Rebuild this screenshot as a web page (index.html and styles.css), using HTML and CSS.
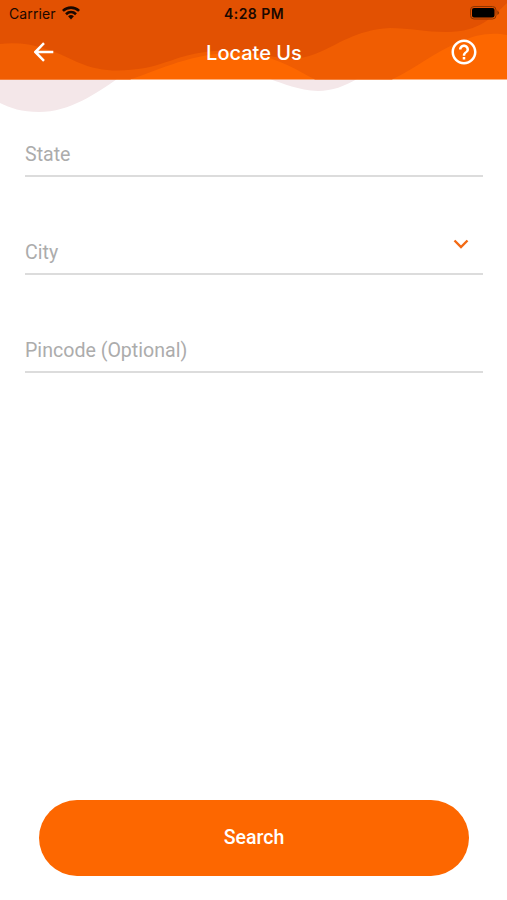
FILE: index.html
```html
<!DOCTYPE html>
<html lang="en">
<head>
<meta charset="utf-8">
<title>Locate Us</title>
<link rel="stylesheet" href="styles.css">
</head>
<body>
<div class="screen">
  <header class="header">
    <svg class="waves" viewBox="0 0 507 120" aria-hidden="true">
      <path fill="#f4e7e9" d="M0 79H117C97 93 70 112 39 112C22 112 10 108 0 103ZM270 79H357C345 86 332 91 318 91C298 90 284 84 270 79Z"/>
      <path fill="#fd6700" d="M0 0H507V79.500H0Z"/>
      <path fill="#f05d02" d="M0 0H507V35C493 32 475 34 460 42C432 53 415 69 392 79.500H315C295 69 275 56 245 53C195 51 163 69 130 79.500H0Z"/>
      <path fill="#e25102" d="M0 0H507V3C493 16 480 32 447 32C425 32 410 28 390 28C355 30 338 45 315 54C300 60 285 59 270 56C250 52 225 49 205 52C180 55 160 66 145 68C120 72 100 72 77 62C50 49 29 41 0 44Z"/>
    </svg>
    <div class="status">
      <div class="carrier"><span>Carrier</span>
        <svg class="wifi" viewBox="0 0 18 14"><g fill="none" stroke="#1a0800" stroke-width="2.600"><path d="M.9 4.9C5.5.5 12.500.5 17.100 4.900"/><path d="M4 8.200C6.900 5.400 11.100 5.400 14 8.200"/></g><path fill="#1a0800" d="M6.100 10.300Q9 7.900 11.900 10.300L9 13.500Z"/></svg>
      </div>
      <div class="time">4:28 PM</div>
      <svg class="battery" viewBox="0 0 30 14"><rect x=".5" y=".5" width="25.500" height="12.500" rx="3.500" fill="none" stroke="#8f3500"/><rect x="2" y="2" width="22.500" height="9.500" rx="2" fill="#000"/><path fill="#8f3500" d="M27.300 4.500Q31 6.750 27.300 9Z"/></svg>
    </div>
    <div class="bar">
      <svg class="back" viewBox="0 0 20 20"><path d="M19.300 10H1.500M10 1.200L1.300 10L10 18.800" fill="none" stroke="#fff" stroke-width="2.500"/></svg>
      <h1 class="title">Locate Us</h1>
      <svg class="help" viewBox="0 0 24 24"><path fill="#fff" d="M11 18h2v-2h-2v2zm1-16C6.480 2 2 6.480 2 12s4.480 10 10 10 10-4.480 10-10S17.520 2 12 2zm0 18c-4.410 0-8-3.590-8-8s3.590-8 8-8 8 3.590 8 8-3.590 8-8 8zm0-14c-2.210 0-4 1.790-4 4h2c0-1.100.900-2 2-2s2 .900 2 2c0 2-3 1.750-3 5h2c0-2.250 3-2.500 3-5 0-2.210-1.790-4-4-4z"/></svg>
    </div>
  </header>
  <main class="form">
    <div class="field"><span>State</span></div>
    <div class="field"><span>City</span><svg class="chevron" viewBox="0 0 16 10"><path d="M1.500 1.500L8 8L14.500 1.500" fill="none" stroke="#f36a14" stroke-width="2.400"/></svg></div>
    <div class="field"><span>Pincode (Optional)</span></div>
  </main>
  <button class="search">Search</button>
</div>
</body>
</html>
```
FILE: styles.css
```css
* { box-sizing: border-box; }
body { margin: 0; background: #fff; font-family: Roboto, "Liberation Sans", sans-serif; }
.screen { width: 507px; height: 900px; display: flex; flex-direction: column; overflow: hidden; }
.header { position: relative; height: 80px; flex: none; }
.waves { position: absolute; left: 0; top: 0; width: 507px; height: 120px; z-index: -1; }
.status { height: 28px; display: grid; grid-template-columns: 1fr auto 1fr; align-items: center; padding: 0 7px 2px 9px; font-family: Inter, sans-serif; font-size: 14px; color: #1a0800; }
.carrier { display: flex; align-items: center; gap: 6px; letter-spacing: .1px; }
.wifi { width: 18px; height: 14px; }
.time { margin-left: -1px; font-weight: 600; letter-spacing: .45px; }
.battery { width: 30px; height: 14px; justify-self: end; }
.bar { height: 48px; display: grid; grid-template-columns: 1fr auto 1fr; align-items: center; padding: 0 28px 0 34px; }
.back { width: 20px; height: 20px; }
.title { margin: 0 0 0 -5px; padding-top: 1px; font: 500 20px Inter, sans-serif; color: #fff; }
.help { width: 30px; height: 30px; justify-self: end; }
.form { padding: 33px 24px 0 25px; }
.field { height: 64px; margin-bottom: 34px; border-bottom: 2px solid #dcdcdc; display: flex; align-items: center; justify-content: space-between; padding: 20px 14px 0 0; font-size: 19.6px; color: #acacac; }
.chevron { width: 16px; height: 10px; margin-top: -17px; }
.search { margin: auto 38px 24px 39px; height: 76px; flex: none; border: 0; border-radius: 38px; background: #fd6700; color: #fff; font: 500 19.5px Roboto, sans-serif; padding: 0 0 1px; }
```
